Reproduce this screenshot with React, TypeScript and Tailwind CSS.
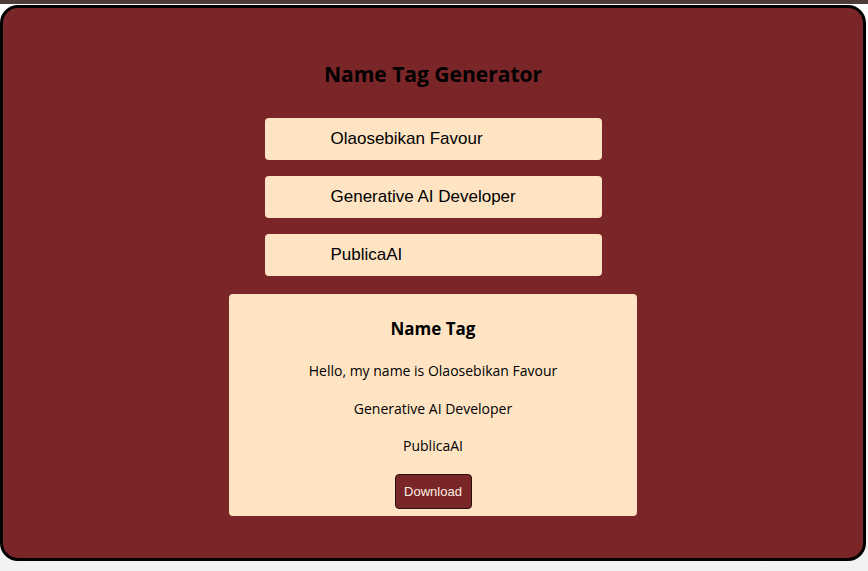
import React from "react";

export default function App() {
  const fields = ["Olaosebikan Favour", "Generative AI Developer", "PublicaAI"];
  return (
    <div className="w-[868px] h-[571px] bg-gradient-to-b from-white to-[#f2f2f2] flex flex-col overflow-hidden">
      <div className="h-[4px] bg-[#4d3b36] shrink-0" />
      <div className="ml-0 mt-[1px] w-[866px] h-[556px] bg-[#7a2629] border-[3px] border-black rounded-[18px] flex flex-col items-center shrink-0">
        <h1
          className="mt-[52px] text-[21px] font-bold text-black leading-[28px]"
          style={{ fontFamily: '"Open Sans", "Noto Sans", sans-serif' }}
        >
          Name Tag Generator
        </h1>
        <div className="mt-[30px] flex flex-col gap-[16px]">
          {fields.map((f) => (
            <div
              key={f}
              className="w-[337px] h-[42px] bg-[#ffe4c4] rounded-[4px] flex items-center pl-[66px] text-[17px] text-black"
              style={{ fontFamily: '"Liberation Sans", Arial, sans-serif' }}
            >
              {f}
            </div>
          ))}
        </div>
        <div
          className="mt-[18px] w-[408px] h-[222px] bg-[#ffe4c4] rounded-[4px] flex flex-col items-center text-black"
          style={{ fontFamily: '"Open Sans", "Noto Sans", sans-serif' }}
        >
          <div className="mt-[23px] text-[17px] font-bold leading-[24px]">Name Tag</div>
          <div className="mt-[20px] text-[14px] leading-[20px]">Hello, my name is Olaosebikan Favour</div>
          <div className="mt-[18px] text-[14px] leading-[20px]">Generative AI Developer</div>
          <div className="mt-[17px] text-[14px] leading-[20px]">PublicaAI</div>
          <button
            className="mt-[18px] w-[77px] h-[35px] bg-[#7a2629] border border-[#2a1010] rounded-[4px] text-[#fbeee0] text-[13px]"
            style={{ fontFamily: '"Liberation Sans", Arial, sans-serif' }}
          >
            Download
          </button>
        </div>
      </div>
    </div>
  );
}
